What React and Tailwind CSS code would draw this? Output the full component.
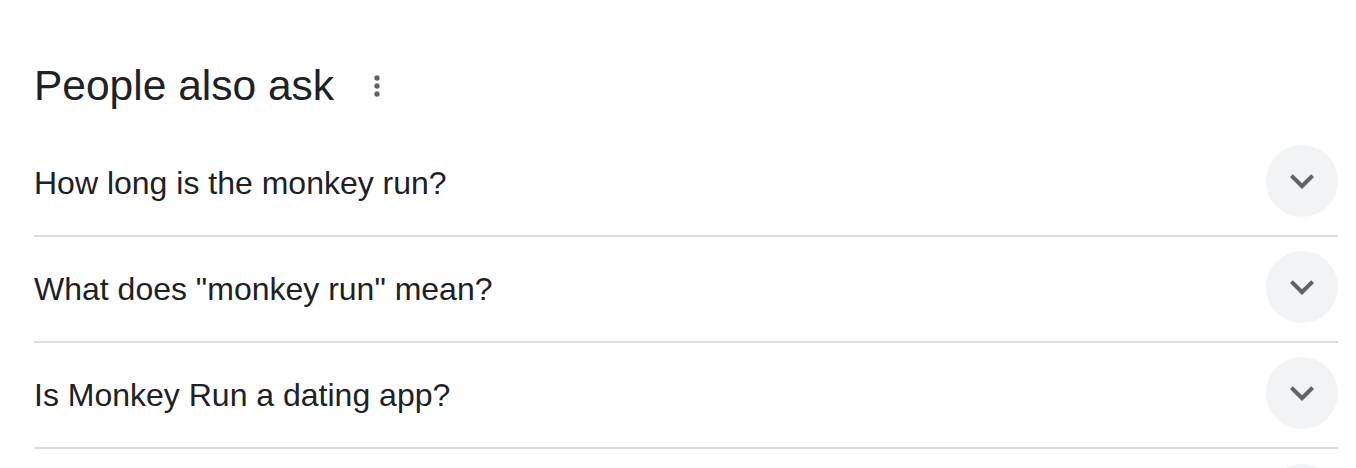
const QUESTIONS = [
  "How long is the monkey run?",
  'What does "monkey run" mean?',
  "Is Monkey Run a dating app?",
];

function Chevron() {
  return (
    <svg className="w-12 h-12 text-[#5f6368]" viewBox="0 0 24 24" fill="currentColor" aria-hidden>
      <path d="M16.59 8.59L12 13.17 7.41 8.59 6 10l6 6 6-6z" />
    </svg>
  );
}

function MoreVert() {
  return (
    <svg className="w-8 h-8 text-[#5f6368]" viewBox="0 0 24 24" fill="currentColor" aria-hidden>
      <circle cx="12" cy="6" r="2" />
      <circle cx="12" cy="12" r="2" />
      <circle cx="12" cy="18" r="2" />
    </svg>
  );
}

export default function App() {
  return (
    <div
      className="w-[1356px] h-[468px] overflow-hidden bg-white pl-[34px] pr-[18px] text-[#202124]"
      style={{ fontFamily: '"Liberation Sans", Arial, sans-serif' }}
    >
      {/* header */}
      <div className="h-[131px] flex items-start pt-[64px]">
        <h2 className="text-[42.5px] leading-[44px] font-normal">People also ask</h2>
        <button type="button" className="ml-[27px] mt-[6px] flex items-center justify-center">
          <MoreVert />
        </button>
      </div>

      {QUESTIONS.map((q) => (
        <div
          key={q}
          className="h-[106px] flex items-center justify-between border-b-2 border-[#dadce0]"
        >
          <span className="text-[32px] leading-[40px]">{q}</span>
          <div className="w-[72px] h-[72px] rounded-full bg-[#f1f3f4] flex items-center justify-center -mt-[4px]">
            <Chevron />
          </div>
        </div>
      ))}
      <div className="h-[106px] flex items-center justify-end">
        <div className="w-[72px] h-[72px] rounded-full bg-[#f1f3f4] -mt-[4px]" />
      </div>
    </div>
  );
}
